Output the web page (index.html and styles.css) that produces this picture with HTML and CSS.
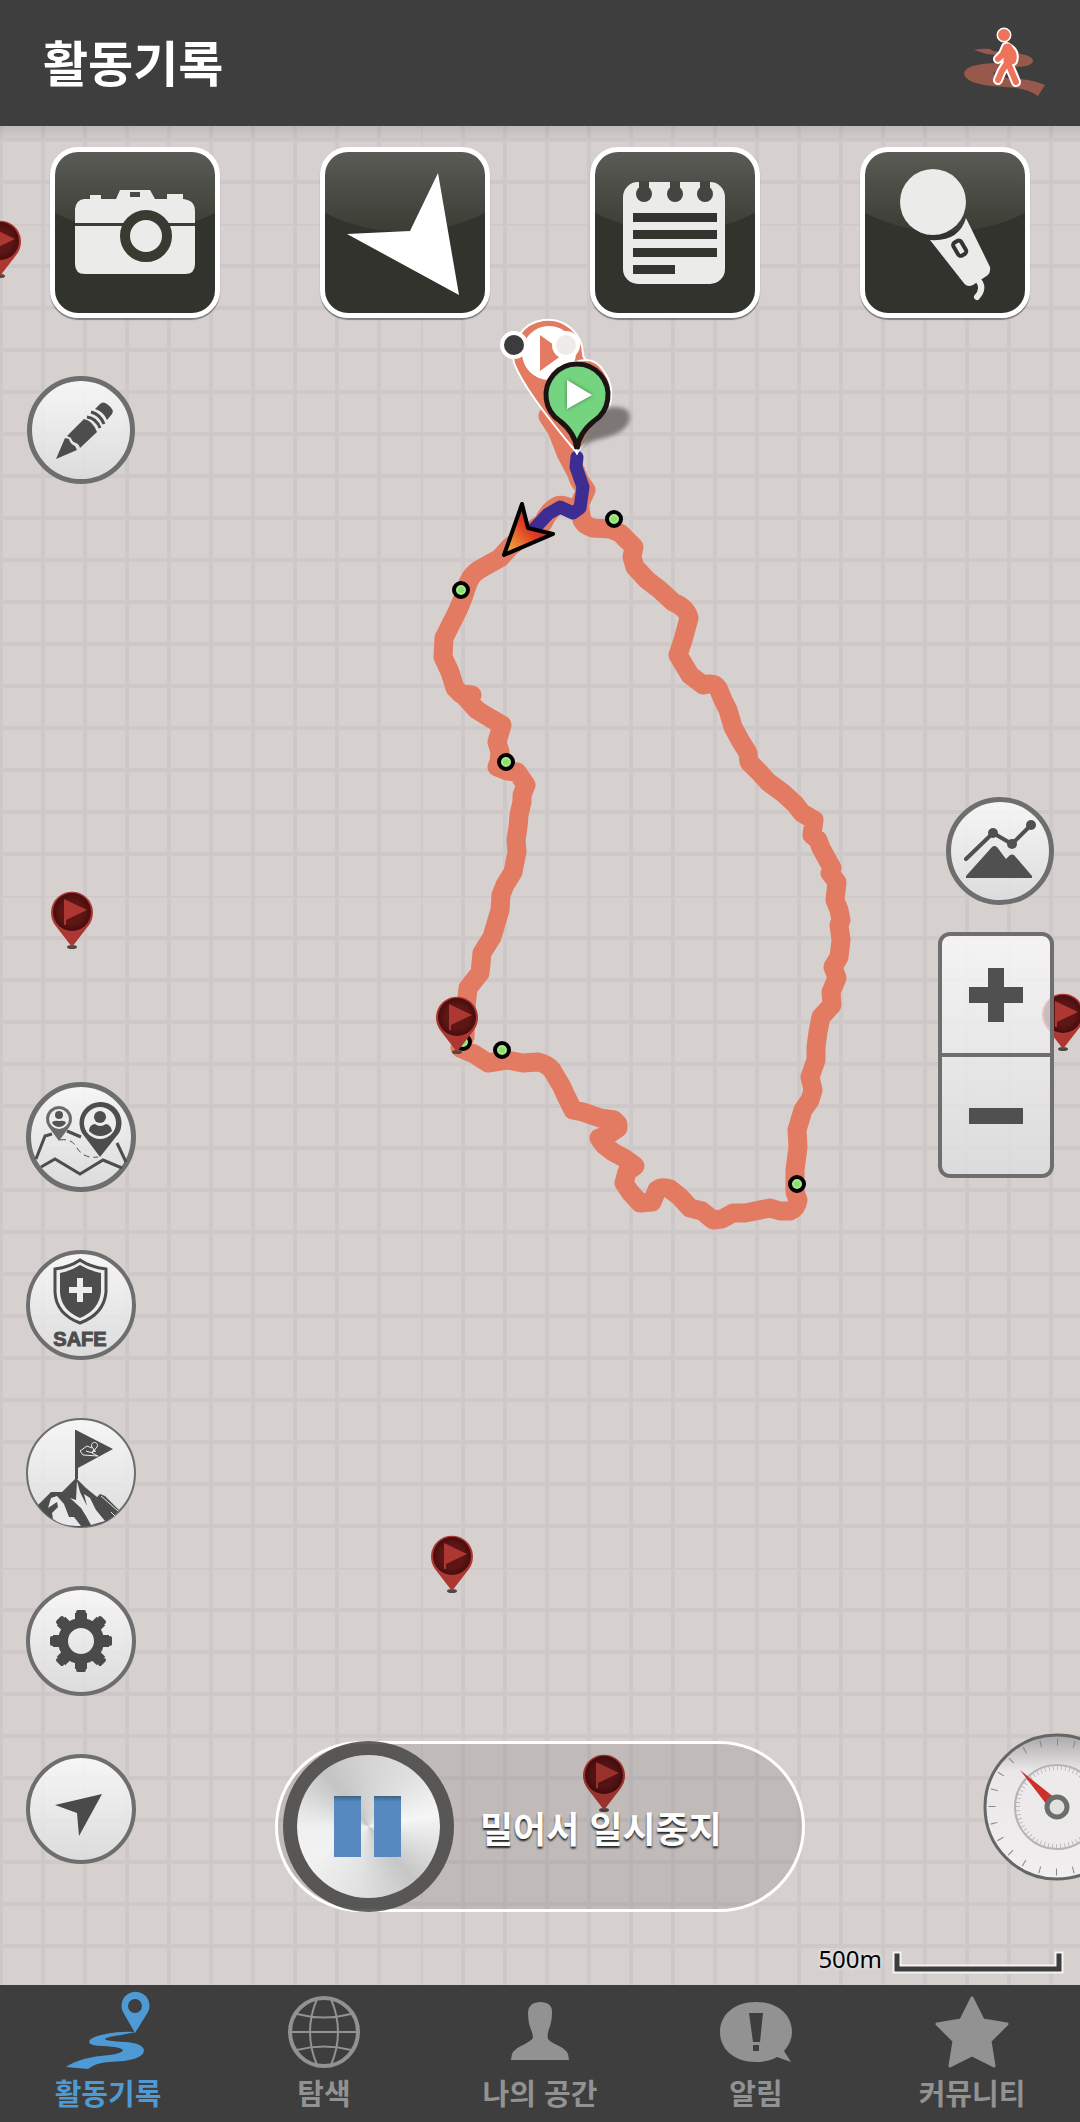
FILE: index.html
```html
<!DOCTYPE html>
<html lang="ko">
<head>
    <meta charset="UTF-8">
    <meta name="viewport" content="width=device-width, initial-scale=1.0">
    <title>활동기록</title>
    <link rel="stylesheet" href="styles.css">
</head>
<body>
    <header class="header">
        <h1 class="title">활동기록</h1>
        <button class="activity-type" aria-label="걷기">
            <svg width="84" height="72" viewBox="0 0 84 72">
                <path fill="#97594c" d="M11 23Q18 21 27 22L30 24Q70 26 70 34Q69 40 50 40L34 44Q27 46 34 50L57 52Q70 53 82 58L75 69Q64 61 42 60Q1 58 1 46Q3 37 32 36L48 32Q40 28 24 27Z"/>
                <g fill="none" stroke="#fff" stroke-width="10" stroke-linecap="round" stroke-linejoin="round">
                    <circle cx="41" cy="8" r="3" stroke-width="9"/>
                    <path d="M43 20L40 27L35 32M44 20Q53 25 50 34L44 36Q38 44 35 53M45 36L53 55"/>
                </g>
                <g fill="none" stroke="#ee7358" stroke-width="6" stroke-linecap="round" stroke-linejoin="round">
                    <circle cx="41" cy="8" r="3"/>
                    <path d="M43 20L40 27L35 32M44 20Q53 25 50 34L44 36Q38 44 35 53M45 36L53 55M45 20V36"/>
                    <path d="M45 21V34" stroke-width="9"/>
                </g>
            </svg>
        </button>
    </header>

    <main class="map">
        <svg class="map-canvas" viewBox="0 126 1080 1859" preserveAspectRatio="xMidYMin slice">
            <defs>
                <pattern id="tile" width="672" height="672" patternUnits="userSpaceOnUse" patternTransform="translate(421 224)">
                    <g stroke="#cec9c8">
                        <path d="M40 336H636M336 40V636" stroke-width="672" stroke-dasharray="4 38"/>
                        <path d="M0 0H672M0 0V672" stroke-width="3"/>
                    </g>
                </pattern>
                <linearGradient id="cursor" x1="0" y1="1" x2="1" y2="0">
                    <stop offset="0.1" stop-color="#f0a53c"/>
                    <stop offset="0.5" stop-color="#e03a22"/>
                    <stop offset="0.9" stop-color="#b01a5a"/>
                </linearGradient>
                <radialGradient id="pin-face">
                    <stop offset="0.6" stop-color="#5e1615"/>
                    <stop offset="1" stop-color="#470d0d"/>
                </radialGradient>
                <filter id="soft">
                    <feGaussianBlur stdDeviation="2"/>
                </filter>
                <g id="flag-pin">
                    <ellipse cy="0" rx="5" ry="2" fill="#4d4747"/>
                    <path d="M0 0L-17 -22A21 21 0 1 1 17 -22Z" fill="#ad3733"/>
                    <circle cy="-35" r="19" fill="url(#pin-face)"/>
                    <path d="M-8 -48L15 -37L-6 -27V-22H-8Z" fill="#ad3733"/>
                </g>
                <g id="waypoint">
                    <circle r="7" fill="#a6ec86" stroke="#000" stroke-width="4"/>
                    <circle r="3" fill="#8fdc72"/>
                </g>
            </defs>
            <rect x="0" y="126" width="1080" height="1859" fill="url(#tile)"/>

            <!-- planned course -->
            <path class="course" d="M548 416L557 430L566 453L576 472L579 480L586 490L580 503L580 510L570 508Q562 504 557 506Q548 511 543 523L525 535L510 547L500 558L482 568Q472 573 468 583L463 598L458 610L444 638L443 657L450 672L455 688L461 694L472 695L466 698L477 710L490 718L502 725L497 742L500 752L499 762L497 767L507 771L517 772L526 785L522 795V802L519 815L518 827L516 840L517 852L513 872L505 885L501 895L500 910L492 937L482 953L480 973L468 988L466 1007L465 1037L460 1048L474 1054L488 1063L507 1060L523 1063L538 1062Q547 1064 552 1070L562 1087L566 1096L573 1110L583 1112L600 1118L614 1120L618 1124L618 1128L608 1135L599 1138L604 1145L613 1152L624 1158L635 1166L627 1172L624 1183L630 1192L640 1203L652 1202L657 1190Q662 1186 670 1189L680 1197L690 1208L702 1211L713 1220L722 1219L733 1213L745 1213L770 1208L780 1211L790 1211Q797 1208 798 1200L795 1192L795 1170L798 1147L797 1130L803 1110L810 1100L813 1090L810 1077L816 1060L816 1047L818 1032L821 1017L832 1005L831 992L837 978L833 967L839 957L841 940L839 925L841 920L839 910L835 900L837 882L830 873L832 868L821 848L818 840L812 835L814 820L802 813L795 804L783 793L768 782L760 773L749 762L748 753L740 740L733 727L728 710L723 700L718 688Q714 682 703 685L690 675L678 655L683 640L689 618Q687 608 673 602L660 590L647 580L635 567L632 557L634 547L620 533L610 529L593 528Q585 526 582 520L580 510"/>
            <path class="track" d="M577 457L576 467L583 487L580 508L573 513L560 507L548 514L533 530"/>

            <use href="#waypoint" x="614" y="519"/>
            <use href="#waypoint" x="461" y="590"/>
            <use href="#waypoint" x="506" y="762"/>
            <use href="#waypoint" x="463" y="1042"/>
            <use href="#waypoint" x="502" y="1050"/>
            <use href="#waypoint" x="797" y="1184"/>

            <path d="M522 504L528 528L553 534L504 555Z" fill="url(#cursor)" stroke="#000" stroke-width="4" stroke-linejoin="round"/>

            <!-- start markers -->
            <path d="M577 453Q524 390 514 363A35 35 0 1 1 583 354Q583 362 600 367Z" fill="#e37b63" stroke="#fff" stroke-width="2"/>
            <path d="M577 453L560 370Q590 350 603 370Q618 390 606 415Z" fill="#e37b63" stroke="#fff" stroke-width="2"/>
            <circle cx="549" cy="353" r="27" fill="#fff"/>
            <path d="M540 335L565 353L540 371Z" fill="#e37b63"/>
            <path d="M579 450Q590 415 605 408Q630 404 630 418Q628 433 600 439Q588 441 579 450Z" fill="#7d7877" filter="url(#soft)"/>
            <path d="M577 449Q575 433 560 421A31 31 0 1 1 594 421Q579 433 577 449Z" fill="#75d47f" stroke="#1c1412" stroke-width="5"/>
            <path d="M567 380L592 395L567 409Z" fill="#447a4a" filter="url(#soft)"/>
            <path d="M567 380L592 395L567 409Z" fill="#fff"/>
            <circle cx="514" cy="345" r="12" fill="#3c3c3c" stroke="#fff" stroke-width="4"/>
            <circle cx="566" cy="345" r="12" fill="#eeecea" stroke="#fff" stroke-width="4"/>

            <use href="#flag-pin" x="0" y="276"/>
            <use href="#flag-pin" x="72" y="947"/>
            <use href="#flag-pin" x="457" y="1052"/>
            <use href="#flag-pin" x="1063" y="1049"/>
            <use href="#flag-pin" x="452" y="1591"/>
            <use href="#flag-pin" x="604" y="1810"/>
        </svg>

        <div class="record-bar">
            <button class="record-button" aria-label="사진">
                <svg viewBox="0 0 170 170">
                    <path fill="#ebebea" fill-rule="evenodd" d="M34 51H40V47H51V51H66L70 42H100L105 51H117V46H133V51Q145 52 145 63V116Q145 126 135 126H35Q25 126 25 116V61Q26 52 34 51ZM80 44V49H90V44Z"/>
                    <path fill="#3c3d35" d="M25 75H145V78H25Z"/>
                    <circle cx="96" cy="88" r="21" fill="#ebebea" stroke="#393a32" stroke-width="10"/>
                </svg>
            </button>
            <button class="record-button" aria-label="위치">
                <svg viewBox="0 0 170 170">
                    <path fill="#fff" d="M118 25L139 147L27 86L90 83Z"/>
                </svg>
            </button>
            <button class="record-button" aria-label="메모">
                <svg viewBox="0 0 170 170">
                    <rect x="33" y="34" width="102" height="102" rx="15" fill="#ebebea"/>
                    <g fill="#44453e">
                        <circle cx="54" cy="46" r="8"/>
                        <circle cx="85" cy="46" r="8"/>
                        <circle cx="115" cy="46" r="8"/>
                        <path d="M49 33H59V44H49ZM80 33H90V44H80ZM110 33H120V44H110Z"/>
                    </g>
                    <path fill="#34352e" d="M43 65H127V74H43ZM43 82H127V91H43ZM43 100H127V109H43ZM43 117H85V126H43Z"/>
                </svg>
            </button>
            <button class="record-button" aria-label="음성">
                <svg viewBox="0 0 170 170">
                    <circle cx="73" cy="54" r="33" fill="#ebebea"/>
                    <path fill="#ebebea" d="M106 70L130 119Q131 126 125 129L113 137Q107 140 103 134L70 92Q99 94 106 70Z"/>
                    <rect x="95" y="93" width="9" height="15" rx="3" transform="rotate(-30 99 100)" fill="#ebebea" stroke="#34352e" stroke-width="4"/>
                    <path d="M118 132Q125 140 117 149" fill="none" stroke="#ebebea" stroke-width="6" stroke-linecap="round"/>
                </svg>
            </button>
        </div>

        <div class="controls">
            <div class="left-tools">
                <button class="round-button small" aria-label="그리기">
                    <svg viewBox="0 0 108 108">
                        <g fill="#4d4d4d">
                            <path d="M29 83L38 62L42 63Q43 68 48 70L50 74Z"/>
                            <path d="M40 60L57 43Q66 45 70 56L53 72Q52 68 49 67Q45 66 44 62Z"/>
                            <path d="M68 33L73 28Q76 25 80 28Q88 34 85 38L80 44Q77 36 68 33Z"/>
                        </g>
                        <path d="M60 41Q69 42 73 52M64 36Q73 38 77 48" fill="none" stroke="#4d4d4d" stroke-width="3"/>
                    </svg>
                </button>
                <button class="round-button push" aria-label="동료 위치">
                    <svg viewBox="0 0 110 110">
                        <g fill="none" stroke="#4d4d4d" stroke-width="3">
                            <path d="M10 77L19 54L26 52M41 49L55 55M91 61L100 80M15 85L29 77L54 92L77 78L96 86"/>
                            <path d="M34 58Q46 56 51 66Q58 77 72 75" stroke-width="1" stroke-dasharray="6 4"/>
                        </g>
                        <path d="M33 59L22 44A13 13 0 1 1 44 44Z" fill="#6b6b6b"/>
                        <circle cx="33" cy="37" r="10" fill="#eeecee"/>
                        <circle cx="33" cy="33" r="4" fill="#555"/>
                        <path d="M26 41Q27 38 33 39Q39 38 40 41Q37 45 33 45Q29 45 26 41Z" fill="#555"/>
                        <path d="M74 75L56 51A21 21 0 1 1 93 51Z" fill="#4d4d4d"/>
                        <circle cx="74" cy="41" r="16" fill="#eeecee"/>
                        <circle cx="74" cy="35" r="6" fill="#4d4d4d"/>
                        <path d="M63 49Q63 43 69 42Q74 46 80 42Q85 43 86 49Q81 54 74 54Q68 54 63 49Z" fill="#4d4d4d"/>
                    </svg>
                </button>
                <button class="round-button medium" aria-label="SAFE">
                    <svg viewBox="0 0 110 110">
                        <path d="M54 10Q64 17 80 19V42Q78 64 54 73Q30 64 29 42V19Q44 17 54 10Z" fill="#eeecee" stroke="#4d4d4d" stroke-width="3"/>
                        <path d="M54 15Q64 21 75 23V42Q73 60 54 68Q35 60 34 42V23Q45 21 54 15Z" fill="#4d4d4d"/>
                        <path d="M51 28H57V37H66V43H57V52H51V43H43V37H51Z" fill="#eeecee"/>
                        <text class="safe-label" x="54" y="96" text-anchor="middle">SAFE</text>
                    </svg>
                </button>
                <button class="round-button thin" aria-label="정상 도전">
                    <svg viewBox="0 0 110 110">
                        <path d="M50 12L87 31L52 50V61H49V12Z" fill="#4d4d4d"/>
                        <path d="M54 33L61 28L66 30M54 33L57 37L72 38L66 35L68 31M60 33Q65 36 70 33M67 30A3 3 0 1 1 70 30L68 33Z" fill="none" stroke="#eee" stroke-width="1"/>
                        <path d="M12 87L25 74H36L50 60L60 70L71 79L74 76L79 78L93 92Q88 99 80 103Q66 109 54 109Q38 108 27 101Q17 95 12 87Z" fill="#4d4d4d"/>
                        <path d="M22 90L25 80L31 78L38 86L43 99L48 99L55 108Q38 109 27 101L26 95L32 89L31 84L28 86ZM51 63L54 74L61 88L58 76L64 80L70 92L79 103L65 107L60 98L55 90L44 80L50 82Z" fill="#e9e7e9"/>
                        <path d="M68 79L92 106L100 92L79 76Z" fill="none"/>
                        <path d="M75 78L92 93M85 94L89 98" stroke="#e9e7e9" stroke-width="1"/>
                    </svg>
                </button>
                <button class="round-button medium" aria-label="설정">
                    <svg viewBox="0 0 110 110">
                        <g fill="none" stroke="#4a4a4a">
                            <circle cx="55" cy="55" r="18" stroke-width="10"/>
                            <path d="M55 35V27M55 75V83M35 55H27M75 55H83M41 41L35 35M69 69L75 75M41 69L35 75M69 41L75 35" stroke-width="12"/>
                            <path d="M52 26H58M52 84H58M26 52V58M84 52V58M32 36L36 32M78 74L74 78M36 78L32 74M74 32L78 36" stroke-width="4" stroke-linecap="round"/>
                        </g>
                    </svg>
                </button>
                <button class="round-button medium" aria-label="현재 위치">
                    <svg viewBox="0 0 110 110">
                        <path d="M76 40L53 82L51 59L29 51Z" fill="#4a4a4a"/>
                    </svg>
                </button>
            </div>

            <div class="pause-slider">
                <input type="range" id="pause" min="0" max="100" value="0">
                <label for="pause">밀어서 일시중지</label>
            </div>

            <div class="right-tools">
                <button class="round-button small" aria-label="고도">
                    <svg viewBox="0 0 108 108">
                        <path d="M20 62L47 36L66 47L85 28" fill="none" stroke="#505050" stroke-width="4" stroke-linecap="round"/>
                        <g fill="#505050">
                            <circle cx="47" cy="36" r="5"/>
                            <circle cx="66" cy="47" r="5"/>
                            <circle cx="85" cy="28" r="5"/>
                            <path d="M20 79L46 50Q48 48 51 50L60 62L64 58Q66 57 68 58L86 79V81H20Z"/>
                        </g>
                    </svg>
                </button>
                <div class="zoom">
                    <button aria-label="확대">
                        <svg width="54" height="54" viewBox="0 0 54 54"><path d="M19 0H35V19H54V35H35V54H19V35H0V19H19Z" fill="#505050"/></svg>
                    </button>
                    <button aria-label="축소">
                        <svg width="54" height="54" viewBox="0 0 54 54"><path d="M0 19H54V35H0Z" fill="#505050"/></svg>
                    </button>
                </div>
                <button class="gauge" aria-label="속도계">
                    <svg width="148" height="148" viewBox="0 0 148 148">
                        <defs>
                            <linearGradient id="dial" x1="0" y1="0" x2="0" y2="1">
                                <stop offset="0" stop-color="#a9a7a8"/>
                                <stop offset="0.25" stop-color="#e9e7e8"/>
                                <stop offset="1" stop-color="#f1eff0"/>
                            </linearGradient>
                        </defs>
                        <circle cx="74" cy="74" r="72" fill="url(#dial)" stroke="#666" stroke-width="3"/>
                        <circle cx="74" cy="74" r="65" fill="none" stroke="#888" stroke-width="7" pathLength="240" stroke-dasharray="0.6 9.4"/>
                        <circle cx="74" cy="74" r="42" fill="#eceaeb" stroke="#b5b3b4" stroke-width="2"/>
                        <circle cx="74" cy="74" r="39" fill="none" stroke="#aaa" stroke-width="4" pathLength="360" stroke-dasharray="1 5"/>
                        <path d="M37 37L72 65L64 72Z" fill="#d0302a"/>
                        <circle cx="74" cy="74" r="10" fill="#dfe3dc" stroke="#6c6e6b" stroke-width="5"/>
                    </svg>
                </button>
            </div>
        </div>

        <div class="scale">
            <span>500m</span>
            <svg width="172" height="26" viewBox="0 0 172 26">
                <path d="M5 5V18H167V5" fill="none" stroke="#f5f3f3" stroke-width="9" stroke-linecap="square"/>
                <path d="M5 5V18H167V5" fill="none" stroke="#3d3d3d" stroke-width="5" stroke-linecap="square"/>
            </svg>
        </div>
    </main>

    <nav class="tabs">
        <a class="tab active" href="#record">
            <svg viewBox="0 0 90 86">
                <path fill-rule="evenodd" d="M72 45L60 24A14 14 0 1 1 85 24ZM72 11A7 7 0 1 0 72 25A7 7 0 1 0 72 11Z"/>
                <path d="M73 44Q54 43 38 47Q26 50 26 54Q27 58 40 58Q58 59 60 62Q60 65 47 67Q17 69 3 79L25 81Q32 75 46 74Q81 73 81 62Q79 55 62 54Q42 53 42 51Q43 49 58 47Z"/>
            </svg>
            <span>활동기록</span>
        </a>
        <a class="tab" href="#explore">
            <svg viewBox="0 0 90 86">
                <g fill="none" stroke="#929292" stroke-width="2">
                    <circle cx="45" cy="44" r="34" stroke-width="4"/>
                    <path d="M11 44H79M18 26Q45 33 72 26M18 62Q45 55 72 62M38 11Q24 44 38 77M52 11Q66 44 52 77"/>
                </g>
            </svg>
            <span>탐색</span>
        </a>
        <a class="tab" href="#my">
            <svg viewBox="0 0 90 86">
                <path d="M16 72Q16 62 26 58Q36 53 38 50Q38 46 35 39Q33 33 33 24Q34 14 45 14Q57 14 57 24Q57 34 54 41Q52 47 53 51Q55 54 64 58Q74 62 74 72Z"/>
            </svg>
            <span>나의 공간</span>
        </a>
        <a class="tab" href="#alarm">
            <svg viewBox="0 0 90 86">
                <path d="M45 14C67 14 81 27 81 44Q81 54 73 63L80 74L66 69Q58 74 45 74C23 74 9 61 9 44S23 14 45 14Z"/>
                <path d="M38 25H52L49 54H42ZM42 57H48V63H42Z" fill="#3e3e3e"/>
            </svg>
            <span>알림</span>
        </a>
        <a class="tab" href="#community">
            <svg viewBox="0 0 90 86">
                <path d="M45 10L56 32L80 36L63 53L67 78L45 67L23 78L27 53L10 36L34 32Z" stroke="#929292" stroke-width="3" stroke-linejoin="round"/>
            </svg>
            <span>커뮤니티</span>
        </a>
    </nav>
</body>
</html>
```
FILE: styles.css
```css
* {
    box-sizing: border-box;
}
body {
    display: flex;
    flex-direction: column;
    min-height: 100vh;
    margin: 0;
    background-color: #3e3e3e;
    font-family: "Noto Sans CJK KR", "Noto Sans", sans-serif;
}
button {
    padding: 0;
    border: none;
    background: none;
    cursor: pointer;
}
svg {
    display: block;
}
.header {
    display: flex;
    align-items: center;
    justify-content: space-between;
    height: 126px;
    padding: 0 33px 0 43px;
    background-color: #3e3e3e;
    color: #fff;
}
.title {
    margin: 0;
    padding-bottom: 4px;
    font-size: 49px;
    font-weight: 700;
    line-height: 64px;
}

/* map */
.map {
    position: relative;
    display: flex;
    flex: 1;
    flex-direction: column;
    overflow: hidden;
    background-color: #d6d0cf;
}
.map::after {
    content: "";
    position: absolute;
    top: 0;
    left: 0;
    width: 100%;
    height: 16px;
    background: linear-gradient(rgba(0, 0, 0, 0.1), rgba(0, 0, 0, 0));
    pointer-events: none;
}
.map-canvas {
    position: absolute;
    top: 0;
    left: 0;
    width: 100%;
    height: 100%;
}
.course {
    fill: none;
    stroke: #e37b63;
    stroke-width: 19px;
    stroke-linecap: round;
    stroke-linejoin: round;
}
.track {
    fill: none;
    stroke: #3d2d93;
    stroke-width: 13px;
    stroke-linecap: round;
    stroke-linejoin: round;
}

/* photo, location, memo and voice */
.record-bar {
    position: relative;
    display: grid;
    grid-template-columns: repeat(4, 1fr);
    justify-items: center;
    padding-top: 21px;
}
.record-button {
    width: 170px;
    height: 171px;
    border: 5px solid #fff;
    border-radius: 28px;
    background:
        radial-gradient(ellipse 124px 80px at 50% 0, rgba(0, 0, 0, 0) 99%, #32332c 100%),
        linear-gradient(#5a5b54, #3b3c34 80px);
    box-shadow: 0 2px 1px rgba(0, 0, 0, 0.4);
}
.record-button svg {
    margin: -5px;
    width: 170px;
}

/* floating buttons */
.controls {
    position: relative;
    display: flex;
    flex: 1;
    justify-content: space-between;
    padding: 0 26px;
}
.left-tools,
.right-tools {
    display: flex;
    flex-direction: column;
    width: 116px;
}
.left-tools {
    gap: 58px;
    padding: 58px 0 121px;
}
.left-tools .small {
    margin-left: 1px;
}
.right-tools {
    align-items: flex-end;
    gap: 27px;
    padding: 479px 0 104px;
}
.push {
    margin-top: auto;
}
.round-button {
    flex: none;
    width: 110px;
    height: 110px;
    border: 5px solid #6e6e6e;
    border-radius: 50%;
    background: linear-gradient(rgba(255, 255, 255, 0.8), rgba(223, 223, 225, 0.8)) padding-box;
}
.round-button svg {
    width: 110px;
    margin: -5px;
}
.round-button.small {
    width: 108px;
    height: 108px;
}
.round-button.small svg {
    width: 108px;
}
.round-button.medium {
    border-width: 4px;
}
.round-button.medium svg {
    margin: -4px;
}
.round-button.thin {
    border-width: 2px;
}
.round-button.thin svg {
    margin: -2px;
}
.safe-label {
    fill: #4d4d4d;
    stroke: #4d4d4d;
    stroke-width: 1px;
    font-family: "Liberation Sans", sans-serif;
    font-size: 20px;
    font-weight: 700;
}
.zoom {
    display: flex;
    flex-direction: column;
    width: 116px;
    height: 246px;
    border: 4px solid #6e6e6e;
    border-radius: 12px;
    background: linear-gradient(rgba(255, 255, 255, 0.75), rgba(223, 223, 225, 0.75)) padding-box;
}
.zoom button {
    display: flex;
    flex: 1;
    align-items: center;
    justify-content: center;
}
.zoom button + button {
    border-top: 4px solid #6e6e6e;
}
.gauge {
    width: 148px;
    margin-top: auto;
    margin-right: -77px;
}

/* slide to pause */
.pause-slider {
    display: grid;
    align-self: flex-end;
    width: 530px;
    height: 171px;
    margin-bottom: 73px;
    border: 3px solid #fff;
    border-radius: 86px;
    background-color: rgba(0, 0, 0, 0.1);
}
.pause-slider input,
.pause-slider label {
    grid-area: 1 / 1;
}
.pause-slider input {
    height: 171px;
    margin: -3px 5px;
    appearance: none;
    background: none;
}
.pause-slider input::-webkit-slider-thumb {
    appearance: none;
    width: 171px;
    height: 171px;
    border: 14px solid rgba(70, 68, 68, 0.85);
    border-radius: 50%;
    background:
        linear-gradient(#3f6284, #5589c0 6px) 37px 41px / 27px 61px no-repeat,
        linear-gradient(#3f6284, #5589c0 6px) 77px 41px / 27px 61px no-repeat,
        conic-gradient(#d4d4d4, #e0e0e0 40deg, #f6f6f6 80deg, #c6c6c6 140deg, #e2e2e2 190deg, #f2f2f2 240deg, #f0f0f0 270deg, #c4c4c4 320deg, #d4d4d4);
    background-clip: padding-box;
}
.pause-slider label {
    align-self: center;
    margin-left: 202px;
    color: #fff;
    font-size: 36px;
    font-weight: 700;
    line-height: 52px;
    text-shadow: 0 2px 2px #222;
    pointer-events: none;
}
.scale {
    position: absolute;
    right: 16px;
    bottom: 8px;
    display: flex;
    align-items: flex-end;
    gap: 10px;
    font-family: "Noto Sans", sans-serif;
    font-size: 24px;
    line-height: 36px;
    color: #000;
    text-shadow: 0 0 4px #fff;
}

/* bottom tabs */
.tabs {
    display: grid;
    grid-template-columns: repeat(5, 1fr);
    height: 137px;
    background-color: #3e3e3e;
}
.tab {
    display: flex;
    flex-direction: column;
    align-items: center;
    padding-top: 3px;
    color: #929292;
    fill: #929292;
    font-size: 29px;
    font-weight: 700;
    line-height: 36px;
    text-decoration: none;
}
.tab svg {
    width: 90px;
}
.tab.active {
    color: #4d9ad5;
    fill: #4d9ad5;
}
```
